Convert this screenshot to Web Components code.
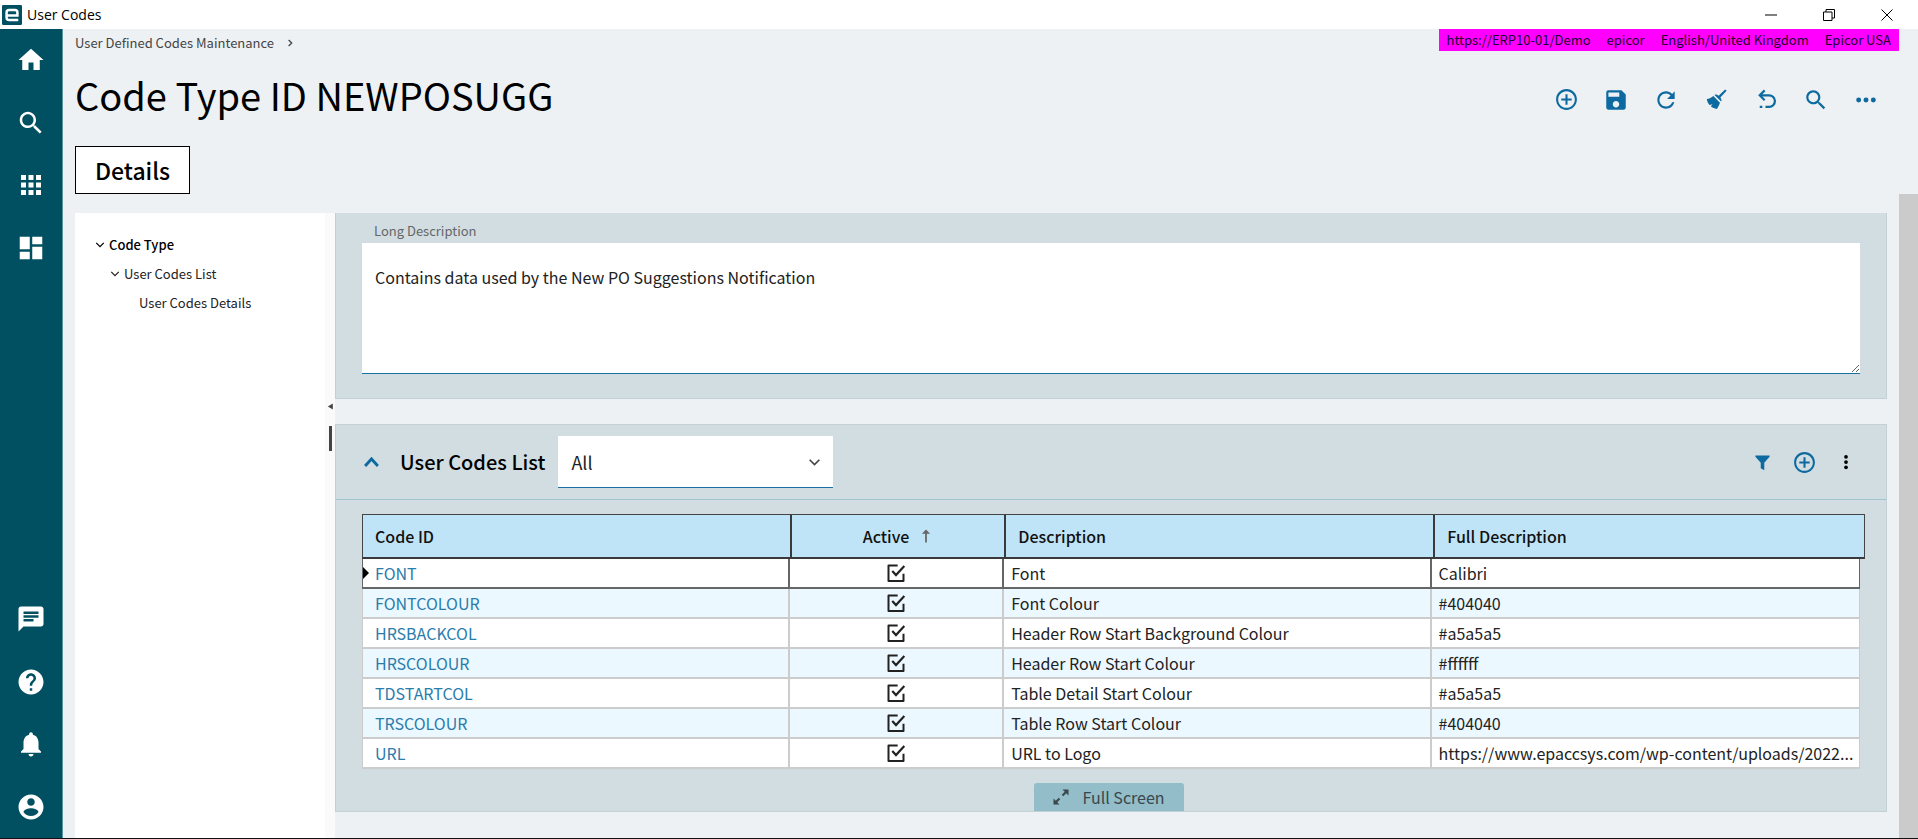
<!DOCTYPE html>
<html lang="en">
<head>
<meta charset="utf-8">
<title>User Codes</title>
<style>
    body {
        margin: 0;
        font-family: "Noto Sans CJK SC", "Noto Sans", sans-serif;
        font-size: 16px;
        line-height: 24px;
        color: #222;
        background: #edf1f4;
        --teal: #005062;
        --blue: #0d6aa0;
        --panel: #d1dde1;
    }
</style>
</head>
<body>
<app-window></app-window>

<script>
const ICONS = {
    home: '<path d="M10 20v-6h4v6h5v-8h3L12 3 2 12h3v8z"/>',
    search: '<path d="M15.5 14h-.79l-.28-.27C15.41 12.59 16 11.11 16 9.5 16 5.91 13.09 3 9.5 3S3 5.91 3 9.5 5.91 16 9.5 16c1.61 0 3.09-.59 4.23-1.57l.27.28v.79l5 4.99L20.49 19l-4.99-5zm-6 0C7.01 14 5 11.99 5 9.5S7.01 5 9.5 5 14 7.01 14 9.5 11.99 14 9.5 14z"/>',
    apps: '<path d="M4 4h4v4H4zM10 4h4v4h-4zM16 4h4v4h-4zM4 10h4v4H4zM10 10h4v4h-4zM16 10h4v4h-4zM4 16h4v4H4zM10 16h4v4h-4zM16 16h4v4h-4z"/>',
    dashboard: '<path d="M3 13h8V3H3v10zm0 8h8v-6H3v6zm10 0h8V11h-8v10zm0-18v6h8V3h-8z"/>',
    chat: '<path d="M20 2H4c-1.1 0-2 .9-2 2v18l4-4h14c1.1 0 2-.9 2-2V4c0-1.100-.9-2-2-2zM6 6h12v2H6zm8 8H6v-2h8v2zm4-3H6V9h12v2z"/>',
    help: '<path d="M12 2C6.480 2 2 6.480 2 12s4.480 10 10 10 10-4.480 10-10S17.520 2 12 2zm1 17h-2v-2h2v2zm2.070-7.750l-.9.920C13.450 12.900 13 13.500 13 15h-2v-.5c0-1.100.450-2.100 1.170-2.830l1.240-1.260c.370-.360.590-.860.590-1.410 0-1.100-.9-2-2-2s-2 .9-2 2H8c0-2.210 1.790-4 4-4s4 1.790 4 4c0 .880-.360 1.680-.930 2.250z"/>',
    bell: '<path d="M12 22c1.100 0 2-.9 2-2h-4c0 1.100.890 2 2 2zm6-6v-5c0-3.070-1.640-5.640-4.500-6.320V4c0-.830-.670-1.500-1.500-1.500s-1.500.670-1.500 1.500v.680C7.630 5.360 6 7.920 6 11v5l-2 2v1h16v-1l-2-2z"/>',
    account: '<path d="M12 2C6.480 2 2 6.480 2 12s4.480 10 10 10 10-4.480 10-10S17.520 2 12 2zm0 3c1.660 0 3 1.340 3 3s-1.340 3-3 3-3-1.340-3-3 1.340-3 3-3zm0 14.200c-2.500 0-4.710-1.280-6-3.220.030-1.990 4-3.080 6-3.080 1.990 0 5.970 1.090 6 3.080-1.290 1.940-3.500 3.220-6 3.220z"/>',
    add: '<path d="M13 7h-2v4H7v2h4v4h2v-4h4v-2h-4V7zm-1-5C6.480 2 2 6.480 2 12s4.480 10 10 10 10-4.480 10-10S17.520 2 12 2zm0 18c-4.410 0-8-3.590-8-8s3.590-8 8-8 8 3.590 8 8-3.590 8-8 8z"/>',
    save: '<path d="M17 3H5a2 2 0 0 0-2 2v14c0 1.100.9 2 2 2h14c1.100 0 2-.9 2-2V7l-4-4zm-5 16c-1.660 0-3-1.340-3-3s1.340-3 3-3 3 1.340 3 3-1.340 3-3 3zm3-10H5V5h10v4z"/>',
    refresh: '<path d="M17.650 6.350C16.200 4.900 14.210 4 12 4c-4.420 0-7.990 3.580-7.990 8s3.570 8 7.990 8c3.730 0 6.840-2.550 7.730-6h-2.080c-.820 2.330-3.040 4-5.650 4-3.310 0-6-2.690-6-6s2.690-6 6-6c1.660 0 3.140.690 4.220 1.780L13 11h7V4l-2.350 2.350z"/>',
    broom: '<path d="M20.300 2.300l1.400 1.400-6 6.300c1.300 1.600 1.300 2.700.700 3.900L10.100 7.600c1.200-.6 2.500-.5 3.900.700zM9 8.700l6.300 6.300c-.6 1.800-1.400 3.900-2.900 6-2.300-.2-4.300-1.100-5.900-2.500l1.700-2-2.900.8C3.900 15.700 3 13.800 2.700 11.600 5.100 11.300 7.200 10.200 9 8.700z"/>',
    undo: '<path d="M9.500 2.500L4 8l5.500 5.500L11 12 8 9h6.500a4.500 4.500 0 0 1 0 9H11v2.200h3.500a6.600 6.600 0 0 0 0-13.300H8l3-2.900zM5.500 18h2.500v2.200H5.500z"/>',
    more: '<circle cx="4" cy="12" r="2.700"/><circle cx="12" cy="12" r="2.700"/><circle cx="20" cy="12" r="2.700"/>',
    dots: '<circle cx="12" cy="5" r="2.500"/><circle cx="12" cy="12" r="2.500"/><circle cx="12" cy="19" r="2.500"/>',
    filter: '<path d="M2 2h20v2l-7.500 8.500V23l-5-3v-7.500L2 4z"/>',
    up: '<path d="M3 17l9-10 9 10" fill="none" stroke="currentColor" stroke-width="4"/>',
    down: '<path d="M3 7l9 9 9-9" fill="none" stroke="currentColor" stroke-width="3"/>',
    right: '<path d="M8 3l9 9-9 9" fill="none" stroke="currentColor" stroke-width="4"/>',
    left: '<path d="M20 2v20L3 12z"/>',
    sort: '<path d="M10.500 23V8H5l7-7 7 7h-5.500v15z"/>',
    expand: '<path d="M14 2h8v8l-3-3-4 4-2-2 4-4zM10 22H2v-8l3 3 4-4 2 2-4 4z"/>',
    check: '<path d="M14 3H3v18.500h18V13" fill="none" stroke="currentColor" stroke-width="2.400" stroke-linejoin="round"/><path d="M7.500 9.500l4.500 5L22 3.500" fill="none" stroke="currentColor" stroke-width="2.600"/>',
    logo: '<rect width="24" height="24" rx="1.500" fill="#005062"/><path d="M6.500 12.500h12V9c0-2-1-3-3-3H8.500c-2 0-3 1-3 3v6c0 2 1 3 3 3h11" fill="none" stroke="#fff" stroke-width="3"/>',
    minimize: '<path d="M0 11h24v2H0z"/>',
    restore: '<path d="M1 6h17v17H1zM6 6V1h17v17h-5" fill="none" stroke="currentColor" stroke-width="2"/>',
    close: '<path d="M1 1l22 22M23 1L1 23" fill="none" stroke="currentColor" stroke-width="2"/>'
};

const ROWS = [
    ['FONT', 'Font', 'Calibri'],
    ['FONTCOLOUR', 'Font Colour', '#404040'],
    ['HRSBACKCOL', 'Header Row Start Background Colour', '#a5a5a5'],
    ['HRSCOLOUR', 'Header Row Start Colour', '#ffffff'],
    ['TDSTARTCOL', 'Table Detail Start Colour', '#a5a5a5'],
    ['TRSCOLOUR', 'Table Row Start Colour', '#404040'],
    ['URL', 'URL to Logo', 'https://www.epaccsys.com/wp-content/uploads/2022...']
];

// <ui-icon name="home" size="30">
class UiIcon extends HTMLElement {
    connectedCallback() {
        const size = this.getAttribute('size') || 24;
        this.attachShadow({ mode: 'open' });
        this.shadowRoot.innerHTML = `
            <style>
                :host { display: inline-flex; flex: none; }
                svg { display: block; fill: currentColor; }
            </style>
            <svg width="${size}" height="${size}" viewBox="0 0 24 24" aria-hidden="true">${ICONS[this.getAttribute('name')]}</svg>
        `;
    }
}

class IconButton extends HTMLElement {
    connectedCallback() {
        this.attachShadow({ mode: 'open' });
        this.shadowRoot.innerHTML = `
            <style>
                :host { display: grid; }
                button {
                    display: grid;
                    place-items: center;
                    padding: 0;
                    border: 0;
                    background: none;
                    color: inherit;
                    cursor: pointer;
                }
            </style>
            <button type="button" aria-label="${this.getAttribute('label')}">
                <ui-icon name="${this.getAttribute('icon')}" size="${this.getAttribute('size') || 24}"></ui-icon>
            </button>
        `;
    }
}

class TitleBar extends HTMLElement {
    connectedCallback() {
        this.attachShadow({ mode: 'open' });
        this.shadowRoot.innerHTML = `
            <style>
                :host {
                    display: flex;
                    align-items: center;
                    gap: 5px;
                    height: 29px;
                    padding: 0 2px;
                    background: #fff;
                    color: #000;
                    font: 14px/20px "Open Sans", sans-serif;
                }
                .controls {
                    display: grid;
                    grid-template-columns: repeat(3, 58px);
                    margin-left: auto;
                }
            </style>
            <ui-icon name="logo" size="20"></ui-icon>
            <slot></slot>
            <div class="controls">
                <icon-button icon="minimize" size="12" label="Minimize"></icon-button>
                <icon-button icon="restore" size="12" label="Restore"></icon-button>
                <icon-button icon="close" size="12" label="Close"></icon-button>
            </div>
        `;
    }
}

class SideBar extends HTMLElement {
    connectedCallback() {
        this.attachShadow({ mode: 'open' });
        this.shadowRoot.innerHTML = `
            <style>
                :host {
                    display: flex;
                    flex-direction: column;
                    justify-content: space-between;
                    box-sizing: border-box;
                    width: 63px;
                    border-right: 1px solid #5d929f;
                    background: var(--teal);
                    color: #fff;
                }
                nav {
                    display: grid;
                    grid-template-rows: repeat(4, 1fr);
                    height: 250px;
                }
            </style>
            <nav aria-label="Main">
                <icon-button icon="home" size="30" label="Home"></icon-button>
                <icon-button icon="search" size="30" label="Search"></icon-button>
                <icon-button icon="apps" size="30" label="Apps"></icon-button>
                <icon-button icon="dashboard" size="30" label="Dashboard"></icon-button>
            </nav>
            <nav aria-label="Support">
                <icon-button icon="chat" size="30" label="Messages"></icon-button>
                <icon-button icon="help" size="30" label="Help"></icon-button>
                <icon-button icon="bell" size="30" label="Notifications"></icon-button>
                <icon-button icon="account" size="30" label="Account"></icon-button>
            </nav>
        `;
    }
}

class PageHeader extends HTMLElement {
    connectedCallback() {
        this.attachShadow({ mode: 'open' });
        this.shadowRoot.innerHTML = `
            <style>
                :host { display: block; padding-left: 12px; }
                .top, .session, .title, .crumb {
                    display: flex;
                    align-items: center;
                }
                .top {
                    justify-content: space-between;
                    height: 28px;
                    padding-right: 19px;
                    font-size: 13px;
                    line-height: 22px;
                }
                .crumb { gap: 12px; color: #444; }
                .crumb a { color: inherit; text-decoration: none; }
                .session {
                    align-self: flex-start;
                    gap: 16px;
                    padding: 0 8px;
                    background: #f0f;
                    color: #200030;
                }
                .title {
                    justify-content: space-between;
                    height: 85px;
                    padding-right: 27px;
                }
                h1 {
                    margin: 0;
                    padding-bottom: 9px;
                    font-size: 38px;
                    line-height: 48px;
                    font-weight: 400;
                    color: #000;
                }
                .tools {
                    display: grid;
                    grid-template-columns: repeat(7, 50px);
                    color: var(--blue);
                }
                .tab {
                    box-sizing: border-box;
                    height: 48px;
                    margin-top: 4px;
                    padding: 0 19px;
                    border: 1px solid #000;
                    background: #fff;
                    color: #000;
                    font: inherit;
                    font-size: 23px;
                    line-height: 30px;
                    font-weight: 500;
                }
            </style>
            <div class="top">
                <div class="crumb">
                    <a href="#">User Defined Codes Maintenance</a>
                    <ui-icon name="right" size="8"></ui-icon>
                </div>
                <div class="session">
                    <span>https://ERP10-01/Demo</span>
                    <span>epicor</span>
                    <span>English/United Kingdom</span>
                    <span>Epicor USA</span>
                </div>
            </div>
            <div class="title">
                <h1><slot></slot></h1>
                <div class="tools">
                    <icon-button icon="add" size="25" label="New"></icon-button>
                    <icon-button icon="save" size="26" label="Save"></icon-button>
                    <icon-button icon="refresh" size="26" label="Refresh"></icon-button>
                    <icon-button icon="broom" size="25" label="Clear"></icon-button>
                    <icon-button icon="undo" size="25" label="Undo"></icon-button>
                    <icon-button icon="search" size="26" label="Search"></icon-button>
                    <icon-button icon="more" size="22" label="More"></icon-button>
                </div>
            </div>
            <button class="tab" type="button">Details</button>
        `;
    }
}

class TreeNav extends HTMLElement {
    connectedCallback() {
        this.attachShadow({ mode: 'open' });
        this.shadowRoot.innerHTML = `
            <style>
                :host {
                    display: flex;
                    flex: none;
                    background: #fff;
                }
                ul { list-style: none; margin: 0; padding: 0 0 0 15px; }
                .root {
                    box-sizing: border-box;
                    width: 250px;
                    padding: 17px 0 0 20px;
                    font-size: 13px;
                    line-height: 29px;
                }
                a {
                    display: flex;
                    align-items: center;
                    gap: 4px;
                    color: #222;
                    text-decoration: none;
                }
                .top { font-weight: 500; color: #000; }
                .leaf { padding-left: 14px; }
                .splitter {
                    display: flex;
                    flex-direction: column;
                    align-items: center;
                    gap: 16px;
                    width: 10px;
                    padding-top: 190px;
                    background: #fafafa;
                    color: #444;
                }
                .grip { width: 3px; height: 25px; background: #444; }
            </style>
            <ul class="root">
                <li>
                    <a class="top" href="#"><ui-icon name="down" size="10"></ui-icon>Code Type</a>
                    <ul>
                        <li>
                            <a href="#"><ui-icon name="down" size="10"></ui-icon>User Codes List</a>
                            <ul><li><a class="leaf" href="#">User Codes Details</a></li></ul>
                        </li>
                    </ul>
                </li>
            </ul>
            <div class="splitter">
                <ui-icon name="left" size="7"></ui-icon>
                <div class="grip"></div>
            </div>
        `;
    }
}

class DescriptionPanel extends HTMLElement {
    connectedCallback() {
        this.attachShadow({ mode: 'open' });
        this.shadowRoot.innerHTML = `
            <style>
                :host {
                    display: flex;
                    flex-direction: column;
                    gap: 2px;
                    padding: 8px 26px 24px;
                    border: 1px solid #c3d0d4;
                    border-top: 0;
                    background: var(--panel);
                }
                label {
                    padding-left: 12px;
                    font-size: 13px;
                    line-height: 20px;
                    color: #666;
                }
                textarea {
                    box-sizing: border-box;
                    height: 131px;
                    padding: 22px 13px;
                    border: 0;
                    border-bottom: 1px solid #1b70a3;
                    background: #fff;
                    font: inherit;
                    color: #222;
                    resize: vertical;
                    outline: none;
                }
            </style>
            <label for="long">Long Description</label>
            <textarea id="long">Contains data used by the New PO Suggestions Notification</textarea>
        `;
    }
}

class CodesGrid extends HTMLElement {
    connectedCallback() {
        this.attachShadow({ mode: 'open' });
        this.shadowRoot.innerHTML = `
            <style>
                :host { display: block; }
                table, thead, tbody { display: block; }
                tbody { margin-right: 5px; }
                tr { display: grid; grid-template-columns: 2fr 1fr 2fr 2fr; box-sizing: border-box; }
                th, td {
                    display: flex;
                    align-items: center;
                    box-sizing: border-box;
                    min-width: 0;
                    overflow: hidden;
                    white-space: nowrap;
                    padding: 0;
                }
                thead tr {
                    height: 45px;
                    border: 1px solid #444;
                    border-bottom: 2px solid #3a3a3a;
                    background: #c0e4f7;
                }
                th {
                    padding-left: 12px;
                    border-right: 2px solid #3a3a3a;
                    font-weight: 500;
                    color: #111;
                }
                th:last-child, td:last-child { border-right: 0; }
                .mid { justify-content: center; gap: 10px; padding: 0; }
                .mid ui-icon { color: #666; }
                tbody tr {
                    height: 30px;
                    border: 1px solid #ccc;
                    border-width: 0 1px 2px;
                    background: #fff;
                }
                tbody tr:nth-child(even) { background: #ecf8ff; }
                td { padding-left: 7px; border-right: 2px solid #ccc; }
                td.mid { padding: 0; }
                td:first-child { gap: 6px; padding: 0; }
                .mark { width: 6px; height: 12px; }
                .current .mark { background: #000; clip-path: polygon(0 0, 100% 50%, 0 100%); }
                .current, .current td { border-color: #666; }
                a { color: #2a7cab; text-decoration: none; }
                .tick { display: grid; color: #222; }
                .tick > * { grid-area: 1 / 1; }
                .tick input { appearance: none; width: 20px; height: 20px; margin: 0; }
                .tick ui-icon { pointer-events: none; color: #222; }
            </style>
            <table>
                <thead>
                    <tr>
                        <th scope="col">Code ID</th>
                        <th scope="col" class="mid">Active<ui-icon name="sort" size="14"></ui-icon></th>
                        <th scope="col">Description</th>
                        <th scope="col">Full Description</th>
                    </tr>
                </thead>
                <tbody>
                    ${ROWS.map(([id, name, full], i) => `
                        <tr class="${i === 0 ? 'current' : ''}">
                            <td><span class="mark"></span><a href="#">${id}</a></td>
                            <td class="mid">
                                <label class="tick">
                                    <input type="checkbox" checked aria-label="${id} active">
                                    <ui-icon name="check" size="20"></ui-icon>
                                </label>
                            </td>
                            <td>${name}</td>
                            <td>${full}</td>
                        </tr>`).join('')}
                </tbody>
            </table>
        `;
    }
}

class CodesPanel extends HTMLElement {
    connectedCallback() {
        this.attachShadow({ mode: 'open' });
        this.shadowRoot.innerHTML = `
            <style>
                :host {
                    display: flex;
                    flex-direction: column;
                    border: 1px solid #c3d0d4;
                    background: var(--panel);
                }
                header {
                    display: flex;
                    align-items: center;
                    height: 74px;
                    padding: 0 19px 0 20px;
                    border-bottom: 1px solid #9fc4cf;
                    color: var(--blue);
                }
                .toggle { width: 30px; margin-right: 14px; }
                h2 {
                    margin: 0 13px 0 0;
                    font-size: 20px;
                    line-height: 30px;
                    font-weight: 500;
                    color: #000;
                }
                .pick { display: grid; align-items: center; }
                .pick > * { grid-area: 1 / 1; }
                .pick ui-icon {
                    justify-self: end;
                    margin-right: 12px;
                    color: #444;
                    pointer-events: none;
                }
                select {
                    appearance: none;
                    box-sizing: border-box;
                    width: 275px;
                    height: 52px;
                    padding: 0 13px;
                    border: 0;
                    border-bottom: 1px solid #1b70a3;
                    border-radius: 0;
                    background: #fff;
                    font: inherit;
                    font-size: 18px;
                    color: #222;
                }
                .actions {
                    display: grid;
                    grid-template-columns: repeat(3, 42px);
                    margin-left: auto;
                }
                .menu { color: #000; }
                codes-grid { margin: 14px 21px 0 26px; }
                .full {
                    display: flex;
                    align-items: center;
                    justify-content: center;
                    gap: 12px;
                    align-self: center;
                    width: 150px;
                    height: 28px;
                    margin: 14px 5px 0 0;
                    padding: 0;
                    border: 0;
                    border-radius: 3px 3px 0 0;
                    background: #92bdc9;
                    color: #3a474c;
                    font: inherit;
                }
            </style>
            <header>
                <icon-button class="toggle" icon="up" size="17" label="Collapse"></icon-button>
                <h2>User Codes List</h2>
                <div class="pick">
                    <select aria-label="Show"><option>All</option></select>
                    <ui-icon name="down" size="13"></ui-icon>
                </div>
                <div class="actions">
                    <icon-button icon="filter" size="17" label="Filter"></icon-button>
                    <icon-button icon="add" size="25" label="Add"></icon-button>
                    <icon-button class="menu" icon="dots" size="18" label="Menu"></icon-button>
                </div>
            </header>
            <codes-grid></codes-grid>
            <button class="full" type="button"><ui-icon name="expand" size="18"></ui-icon>Full Screen</button>
        `;
    }
}

class AppWindow extends HTMLElement {
    connectedCallback() {
        this.attachShadow({ mode: 'open' });
        this.shadowRoot.innerHTML = `
            <style>
                :host {
                    display: flex;
                    flex-direction: column;
                    box-sizing: border-box;
                    min-height: 100vh;
                    border-bottom: 1px solid #111;
                }
                .body, .work { display: flex; flex: 1; }
                .page { display: flex; flex: 1; flex-direction: column; min-width: 0; }
                tree-nav { margin: 19px 0 0 12px; }
                .panels {
                    display: flex;
                    flex: 1;
                    flex-direction: column;
                    gap: 25px;
                    min-width: 0;
                    padding: 19px 12px 24px 0;
                }
                .scroll { width: 19px; background: #cbcbcb; }
            </style>
            <title-bar>User Codes</title-bar>
            <div class="body">
                <side-bar></side-bar>
                <div class="page">
                    <page-header>Code Type ID NEWPOSUGG</page-header>
                    <div class="work">
                        <tree-nav></tree-nav>
                        <main class="panels">
                            <description-panel></description-panel>
                            <codes-panel></codes-panel>
                        </main>
                        <div class="scroll"></div>
                    </div>
                </div>
            </div>
        `;
    }
}

customElements.define('ui-icon', UiIcon);
customElements.define('icon-button', IconButton);
customElements.define('title-bar', TitleBar);
customElements.define('side-bar', SideBar);
customElements.define('page-header', PageHeader);
customElements.define('tree-nav', TreeNav);
customElements.define('description-panel', DescriptionPanel);
customElements.define('codes-grid', CodesGrid);
customElements.define('codes-panel', CodesPanel);
customElements.define('app-window', AppWindow);
</script>
</body>
</html>
